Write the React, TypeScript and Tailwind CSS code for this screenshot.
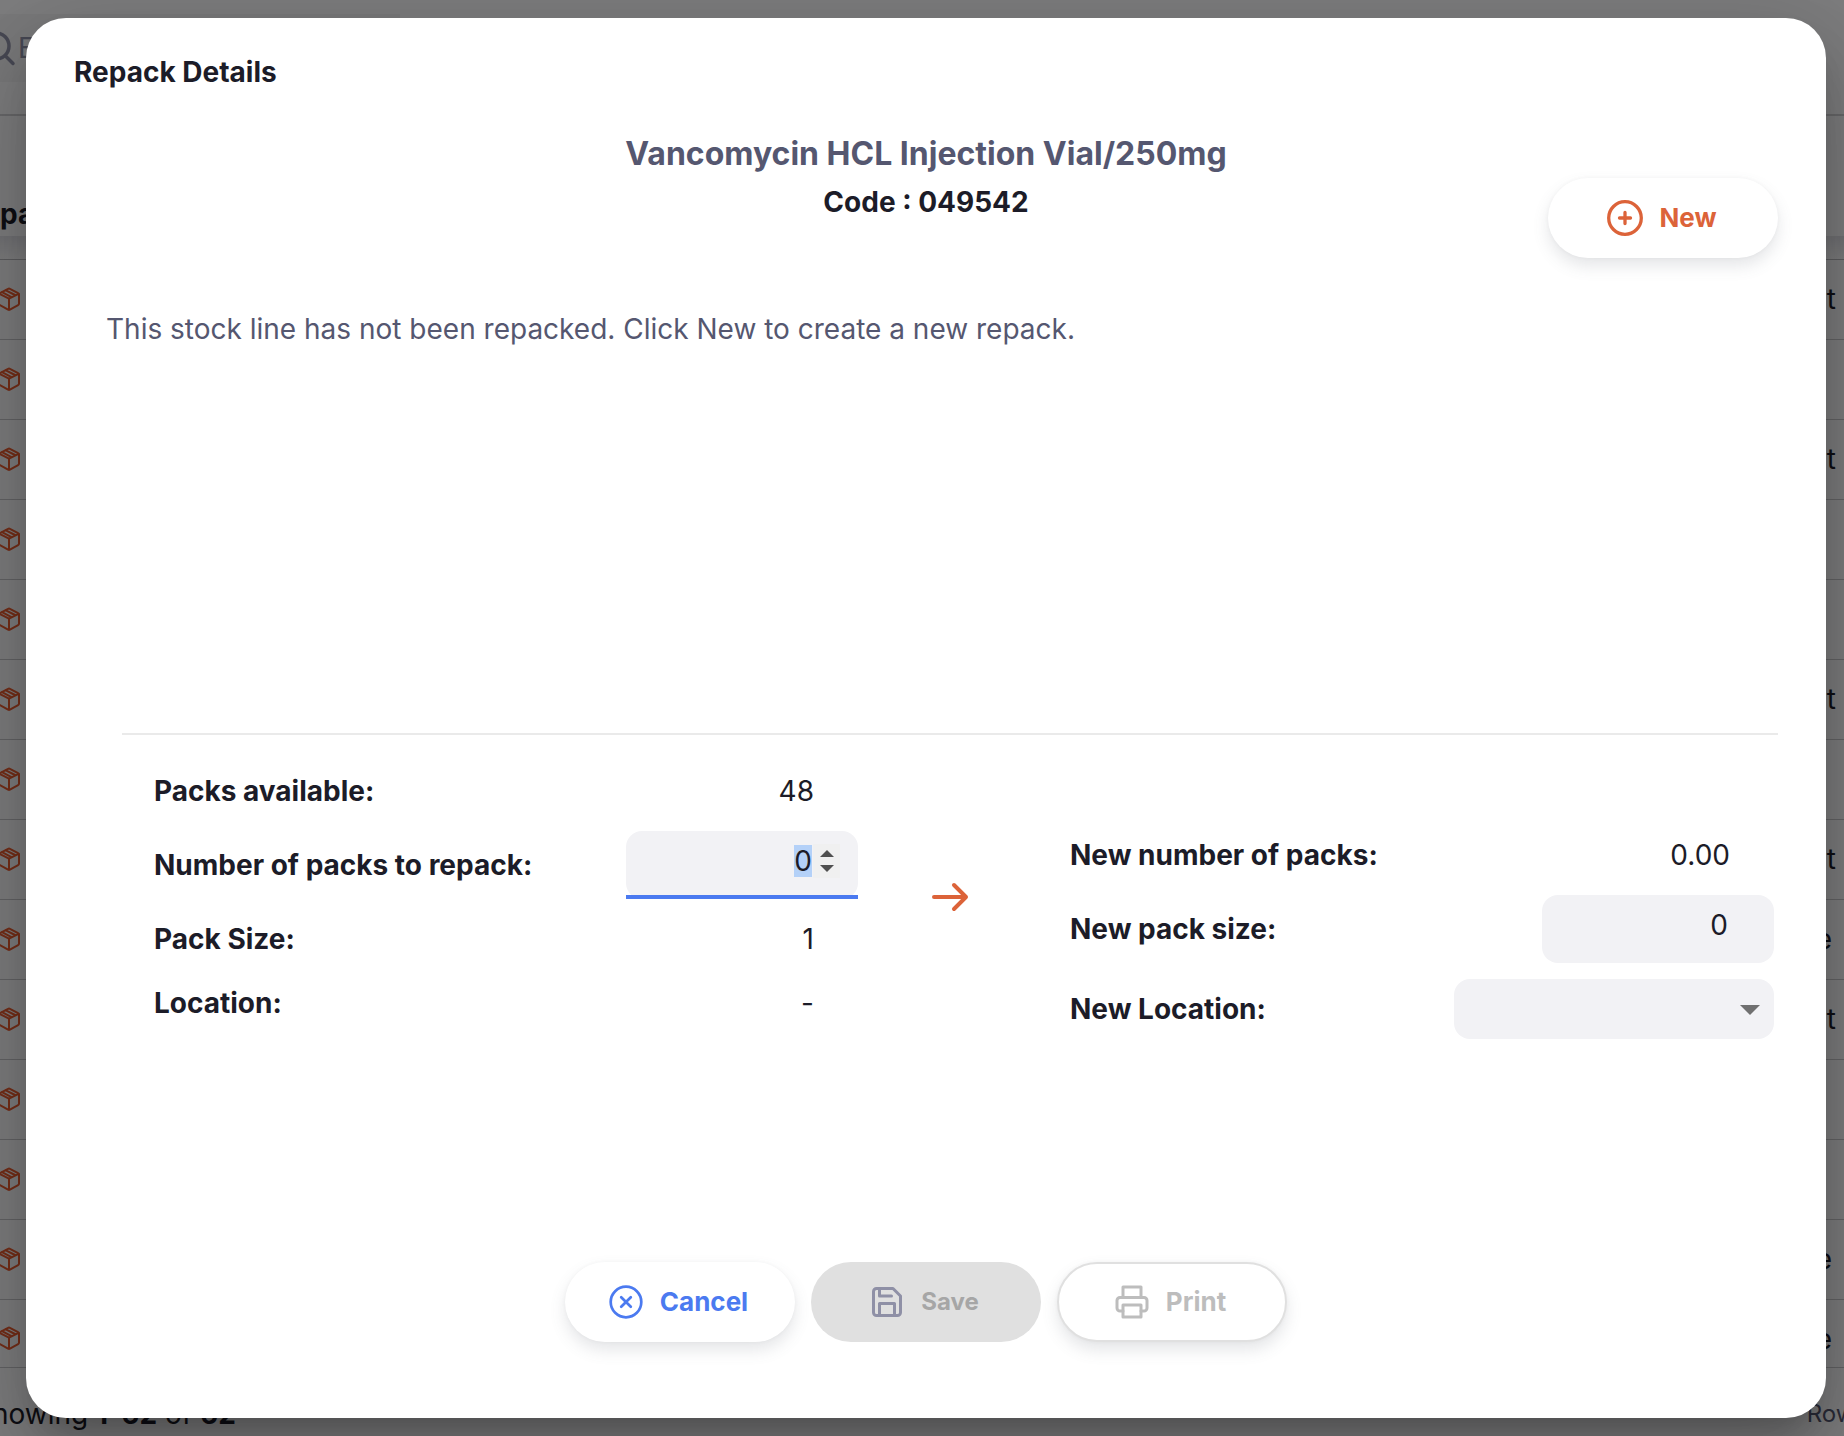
import { useEffect, useRef, type ReactNode } from 'react';

const rowMarks = ['t', '', 't', '', '', 't', '', 't', 'e', 't', '', '', 'e', 'e'];

function PackageIcon() {
  return (
    <svg width="24" height="26" viewBox="0 0 24 26" fill="none" stroke="#e95c30" strokeWidth="2" strokeLinejoin="round" strokeLinecap="round" aria-hidden="true">
      <path d="M22 8.5v9.2a1.6 1.6 0 0 1-.9 1.400l-8.200 4.500a2 2 0 0 1-1.800 0l-8.200-4.500a1.600 1.600 0 0 1-.9-1.400V8.500a1.600 1.600 0 0 1 .9-1.400l8.200-4.300a2 2 0 0 1 1.800 0l8.200 4.300a1.600 1.600 0 0 1 .9 1.400z" />
      <path d="M2.400 7.800L12 12.700l9.600-4.900M12 12.700v10.800" />
      <path d="M5 6.200l9 4.600M8.800 4.300l9.200 4.700" />
    </svg>
  );
}

function Background() {
  return (
    <div className="flex min-h-screen flex-col bg-[#fafafc] text-[28px] text-[#1c1c28]" aria-hidden="true">
      <header className="h-[116px] border-b-2 border-[#d0d0d4] pt-3.5">
        <div className="flex h-[68px] w-[400px] items-center bg-[#f2f2f5]">
          <svg className="-ml-5" width="36" height="36" viewBox="0 0 36 36" fill="none" stroke="#8f90a6" strokeWidth="3.500" strokeLinecap="round">
            <circle cx="16" cy="16" r="13" />
            <path d="M25.500 26l7.500 7.500" />
          </svg>
          <span className="ml-0.5 text-[#8f90a6]">Enter</span>
        </div>
      </header>
      <div className="h-[120px] pt-20 text-[28px] font-bold leading-9">packs</div>
      <div className="h-6 border-b border-[#b9b9bd] bg-linear-to-b from-[#e2e2e8] to-[#fafafc]" />
      <ul>
        {rowMarks.map((mark, i) => (
          <li key={i} className="flex h-20 items-center justify-between border-b border-[#c6c6ca] pr-2 pb-0.5 last:h-[68px] last:items-start last:pt-[25px]">
            <span className="-ml-[3px]"><PackageIcon /></span>
            <span className={mark === 'e' ? 'pr-1 leading-7' : 'leading-7'}>{mark}</span>
          </li>
        ))}
      </ul>
      <footer className="flex flex-1 items-center justify-between overflow-hidden pt-6 whitespace-nowrap leading-8">
        <p className="-ml-[26px]">
          Showing <b>1-62</b> of <b>62</b>
        </p>
        <p className="-mr-6 text-[24px] text-[#555770]">Rows</p>
      </footer>
    </div>
  );
}

const pill = 'flex h-20 w-[230px] cursor-pointer items-center justify-center rounded-full pr-1 font-bold';
const raised = 'bg-white shadow-[0_8px_16px_rgba(96,97,112,0.16),0_0_4px_rgba(40,41,61,0.04)]';

function Row({ label, id, children }: { label: string; id?: string; children: ReactNode }) {
  return (
    <div className="flex min-h-16 items-center justify-between">
      {id ? (
        <label htmlFor={id} className="font-bold">{label}</label>
      ) : (
        <span className="font-bold">{label}</span>
      )}
      {children}
    </div>
  );
}

export default function App() {
  const packsRef = useRef<HTMLInputElement>(null);

  useEffect(() => {
    packsRef.current?.focus();
    packsRef.current?.select();
  }, []);

  return (
    <div className="relative h-screen overflow-hidden font-['Inter',sans-serif]">
      <Background />
      <div className="absolute inset-0 flex bg-black/50 px-[18px] py-[18px] pl-[26px]">
        <div
          role="dialog"
          aria-labelledby="repack-title"
          className="flex flex-1 flex-col rounded-[40px] bg-white px-12 pb-[76px] text-[28px] leading-8 text-[#1c1c28] shadow-[0_22px_30px_-14px_rgba(0,0,0,0.2),0_48px_76px_6px_rgba(0,0,0,0.14),0_18px_92px_16px_rgba(0,0,0,0.12)]"
        >
          <h1 id="repack-title" className="pt-[38px] font-bold">Repack Details</h1>
          <div className="mt-[42px] flex flex-col items-center">
            <h2 className="text-[32px] font-bold leading-[48px] text-[#555770]">Vancomycin HCL Injection Vial/250mg</h2>
            <p className="font-bold leading-[48px]">Code : 049542</p>
          </div>
          <div className="-mt-12 flex justify-end">
            <button type="button" className={`${pill} ${raised} gap-3.5 text-[26px] text-[#dc6339]`}>
              <svg width="40" height="40" viewBox="0 0 40 40" fill="none" stroke="currentColor" strokeLinecap="round" aria-hidden="true">
                <circle cx="20" cy="20" r="16.300" strokeWidth="3.300" />
                <path d="M20 14.500v11M14.500 20h11" strokeWidth="3.300" />
              </svg>
              New
            </button>
          </div>
          <p className="mt-[55px] pl-8 text-[#555770]">This stock line has not been repacked. Click New to create a new repack.</p>

          <section className="mt-auto ml-12 border-t-2 border-[#eaeaea] pt-6">
            <div className="flex pr-1 pl-8">
              <div className="w-[704px]">
                <Row label="Packs available:">
                  <span className="pr-11">48</span>
                </Row>
                <Row label="Number of packs to repack:" id="packs">
                  <div className="relative my-2 flex h-[68px] w-[232px] rounded-2xl bg-[#f2f2f5] pr-[18px] pb-2">
                    <input
                      ref={packsRef}
                      id="packs"
                      inputMode="numeric"
                      defaultValue="0"
                      className="w-full min-w-0 bg-transparent pr-7 text-right outline-none selection:bg-[#b4d1f8]"
                    />
                    <span className="absolute top-[13px] right-[18px] flex h-[34px] w-[27px] flex-col items-center justify-between bg-[#f0f0f0] py-1.5">
                      <button type="button" aria-label="Increase" className="block">
                        <svg width="14" height="7" viewBox="0 0 14 7" fill="#505050"><path d="M0 7L7 0l7 7z" /></svg>
                      </button>
                      <button type="button" aria-label="Decrease" className="block">
                        <svg width="14" height="7" viewBox="0 0 14 7" fill="#505050"><path d="M0 0h14L7 7z" /></svg>
                      </button>
                    </span>
                    <span className="absolute inset-x-0 bottom-0 h-1 bg-[#4b7af0]" />
                  </div>
                </Row>
                <Row label="Pack Size:">
                  <span className="pr-11">1</span>
                </Row>
                <Row label="Location:">
                  <span className="pr-11">-</span>
                </Row>
              </div>
              <div className="flex h-[276px] flex-1 items-center justify-center pr-7">
                <svg width="40" height="32" viewBox="0 0 40 32" fill="none" stroke="#dc6339" strokeWidth="4" strokeLinecap="round" strokeLinejoin="round" aria-label="becomes">
                  <path d="M4 16h32M24 4l12 12-12 12" />
                </svg>
              </div>
              <div className="w-[704px] pt-16">
                <Row label="New number of packs:">
                  <span className="pr-11">0.00</span>
                </Row>
                <Row label="New pack size:" id="pack-size">
                  <div className="my-2 flex h-[68px] w-[232px] rounded-2xl bg-[#f2f2f5] pr-[46px] pb-2">
                    <input id="pack-size" inputMode="numeric" defaultValue="0" className="w-full min-w-0 bg-transparent text-right outline-none" />
                  </div>
                </Row>
                <Row label="New Location:" id="location">
                  <div className="relative my-2 flex h-[60px] w-80 rounded-2xl bg-[#f2f2f5]">
                    <select id="location" className="w-full appearance-none bg-transparent px-4 outline-none">
                      <option></option>
                    </select>
                    <svg className="pointer-events-none absolute top-[26px] right-3.5" width="20" height="10" viewBox="0 0 20 10" fill="#707070" aria-hidden="true"><path d="M0 0h20L10 10z" /></svg>
                  </div>
                </Row>
              </div>
            </div>
          </section>

          <footer className="mt-[215px] flex justify-center gap-4">
            <button type="button" className={`${pill} ${raised} gap-4 text-[26px] text-[#4b7af0]`}>
              <svg width="36" height="36" viewBox="0 0 24 24" fill="none" stroke="currentColor" strokeWidth="1.800" strokeLinecap="round" aria-hidden="true">
                <circle cx="12" cy="12" r="10.200" />
                <path d="M15.200 8.800l-6.400 6.400M8.800 8.800l6.400 6.400" />
              </svg>
              Cancel
            </button>
            <button type="button" disabled className={`${pill} gap-4 bg-[#e0e0e0] text-[24px] text-[#a6a6a6]`}>
              <svg width="36" height="36" viewBox="0 0 24 24" fill="none" stroke="#8f90a6" strokeWidth="2" strokeLinecap="round" strokeLinejoin="round" aria-hidden="true">
                <path d="M19 21H5a2 2 0 0 1-2-2V5a2 2 0 0 1 2-2h11l5 5v11a2 2 0 0 1-2 2z" />
                <path d="M17 21v-8H7v8M7 3v5h8" />
              </svg>
              Save
            </button>
            <button type="button" disabled className={`${pill} ${raised} gap-4 border-2 border-[#e0e0e0] text-[26px] text-[#bdbdbd]`}>
              <svg width="36" height="36" viewBox="0 0 24 24" fill="none" stroke="currentColor" strokeWidth="2" strokeLinecap="round" strokeLinejoin="round" aria-hidden="true">
                <path d="M6 9V2h12v7" />
                <path d="M6 18H4a2 2 0 0 1-2-2v-5a2 2 0 0 1 2-2h16a2 2 0 0 1 2 2v5a2 2 0 0 1-2 2h-2" />
                <path d="M6 14h12v8H6z" />
              </svg>
              Print
            </button>
          </footer>
        </div>
      </div>
    </div>
  );
}
